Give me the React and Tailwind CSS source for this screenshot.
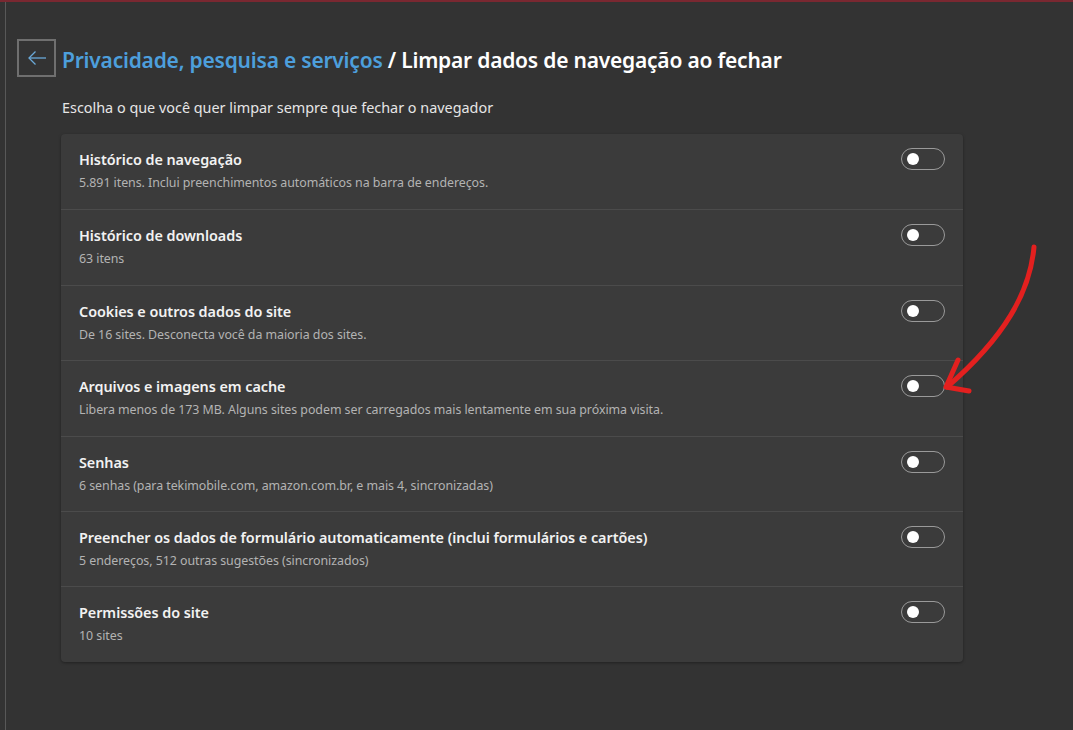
import React from "react";

const rows = [
  ["Histórico de navegação", "5.891 itens. Inclui preenchimentos automáticos na barra de endereços."],
  ["Histórico de downloads", "63 itens"],
  ["Cookies e outros dados do site", "De 16 sites. Desconecta você da maioria dos sites."],
  ["Arquivos e imagens em cache", "Libera menos de 173 MB. Alguns sites podem ser carregados mais lentamente em sua próxima visita."],
  ["Senhas", "6 senhas (para tekimobile.com, amazon.com.br, e mais 4, sincronizadas)"],
  ["Preencher os dados de formulário automaticamente (inclui formulários e cartões)", "5 endereços, 512 outras sugestões (sincronizados)"],
  ["Permissões do site", "10 sites"],
];

function Toggle() {
  return (
    <div className="-mt-[2px] w-[44px] h-[22px] rounded-full border border-[#9a9a9a] flex items-center pl-[5px] shrink-0">
      <div className="w-[12px] h-[12px] rounded-full bg-white" />
    </div>
  );
}

export default function App() {
  return (
    <div
      className="relative w-[1073px] h-[730px] bg-[#333333] overflow-hidden border-t-2 border-[#7a2831]"
      style={{ fontFamily: '"Noto Sans", "Open Sans", sans-serif' }}
    >
      <div className="ml-[5px] h-full border-l border-[#585858] pl-[11px] pt-[37px]">
        <div className="flex items-center gap-[6px]">
          <button className="w-[39px] h-[38px] border-2 border-[#6f6f6f] flex items-center justify-center">
            <svg width="20" height="16" viewBox="0 0 20 16" fill="none" stroke="#6aa9d8" strokeWidth="1.3">
              <path d="M19 8H2" />
              <path d="M8.5 1.5L2 8l6.5 6.5" />
            </svg>
          </button>
          <h1 className="text-[21px] font-semibold tracking-[-0.22px] leading-[30px] pt-[3px]">
            <span className="text-[#4d9fdc]">Privacidade, pesquisa e serviços</span>
            <span className="text-white"> / Limpar dados de navegação ao fechar</span>
          </h1>
        </div>
        <p className="ml-[45px] mt-[21px] text-[14.4px] text-[#e6e6e6] leading-[20px]">
          Escolha o que você quer limpar sempre que fechar o navegador
        </p>
        <div className="ml-[44px] mt-[16px] w-[902px] bg-[#3b3b3b] rounded-[4px] shadow-[0_1px_3px_rgba(0,0,0,0.35)]">
          {rows.map(([t, d], i) => (
            <div
              key={i}
              className={`h-[75.4px] flex items-start justify-between pl-[18px] pr-[18px] pt-[16px] ${i > 0 ? "border-t border-[#4b4b4b]" : ""}`}
            >
              <div>
                <div className="text-[14.4px] font-semibold text-[#f2f2f2] leading-[20px] tracking-[-0.05px]">{t}</div>
                <div className="mt-[5px] text-[12.4px] text-[#b3b3b3] leading-[16px] tracking-[-0.05px]">{d}</div>
              </div>
              <Toggle />
            </div>
          ))}
        </div>
      </div>
      <svg className="absolute left-0 top-0 pointer-events-none" width="1073" height="730" viewBox="0 0 1073 730" fill="none">
        <path d="M1034 245 C1030 290, 1005 335, 947 385" stroke="#e3201f" strokeWidth="5" strokeLinecap="round" />
        <path d="M958 358 L946 385 L969 389" stroke="#e3201f" strokeWidth="5" strokeLinecap="round" strokeLinejoin="round" />
      </svg>
    </div>
  );
}
